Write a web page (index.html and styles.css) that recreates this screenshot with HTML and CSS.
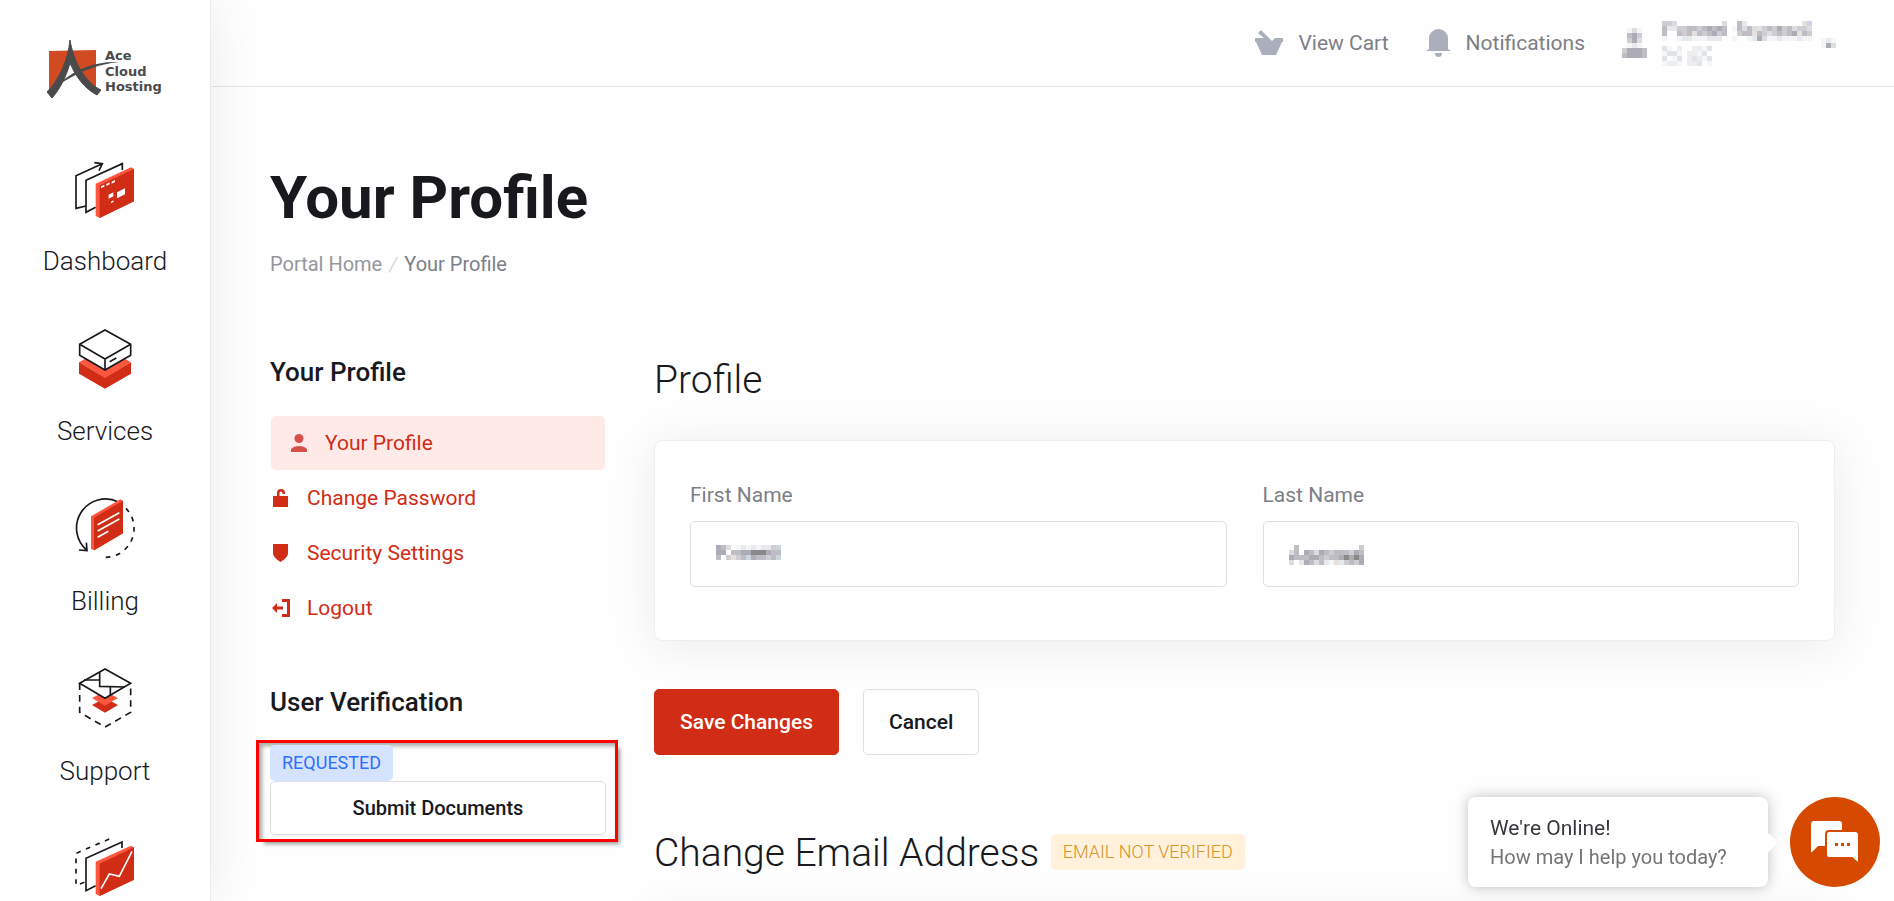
FILE: index.html
```html
<!DOCTYPE html>
<html lang="en">
<head>
    <meta charset="UTF-8">
    <meta name="viewport" content="width=device-width, initial-scale=1.0">
    <title>Your Profile</title>
    <link rel="stylesheet" href="styles.css">
</head>
<body>
    <aside class="sidebar">
        <a class="logo" href="#" aria-label="Ace Cloud Hosting">
            <svg width="117" height="58" viewBox="0 0 117 58">
                <path d="M2 11 L49 10 V48 Q32 36 23 12 Q16 36 2 50Z" fill="#d24a22"/>
                <path d="M23 0 C26 20 38 43 54 50 L50 55 C37 48 29 37 23 23 C19 37 13 49 5 58 L0 52 C12 40 21 20 23 0Z" fill="#4a4a4a" stroke="#4a4a4a"/>
                <path d="M15 41 C30 29 48 21 72 22 C52 24 34 31 16 42Z" fill="#4a4a4a"/>
                <g class="logo-text">
                    <text x="58" y="20">Ace</text>
                    <text x="58" y="36">Cloud</text>
                    <text x="58" y="51">Hosting</text>
                </g>
            </svg>
        </a>
        <nav class="main-nav">
            <a href="#">
                <svg viewBox="0 0 180 180">
                    <g class="line">
                        <path d="M33 144 L3 151 V53 L80 18 M58 14 L82 17 L72 38"/>
                        <path d="M62 148 L33 163 V67 L142 17 V36" fill="#fff"/>
                    </g>
                    <path class="light" d="M62 77 L168 28 L177 33 V130 L74 180 L62 174Z"/>
                    <path class="dark" d="M74 82 L177 33 V130 L74 180Z"/>
                    <path fill="#fff" d="M78 85l10-5v6l-10 5zM94 78l10-5v6l-10 5zM110 71l10-5v6l-10 5zM101 110l14-7v12l-14 7zM126 103l24-12v18l-24 12zM108 131l7-4v5l-7 4z"/>
                </svg>
                <span>Dashboard</span>
            </a>
            <a href="#">
                <svg viewBox="0 0 180 180">
                    <path class="light" d="M12 103 L90 60 L168 103 L90 150Z"/>
                    <path class="dark" d="M12 103 L90 149 L168 103 V137 L90 182 L12 137Z"/>
                    <g class="line">
                        <path fill="#fff" d="M14 49 L90 6 L167 49 V82 L90 126 L14 82Z"/>
                        <path d="M14 49 L90 93 L167 49 M90 93 V126 M104 101 L124 90"/>
                    </g>
                </svg>
                <span>Services</span>
            </a>
            <a href="#">
                <svg viewBox="0 0 180 180">
                    <g class="line">
                        <path d="M130 12 A87 87 0 0 0 36 157 M12 156 L36 158 L34 134"/>
                        <path stroke-dasharray="14 17" d="M153 31 A87 87 0 0 1 76 177"/>
                    </g>
                    <path class="light" d="M48 55 L136 4 L144 8 V106 L58 157 L48 153Z"/>
                    <path class="dark" d="M57 59 L144 8 V106 L57 157Z"/>
                    <path class="line white" d="M68 80 L133 44 M68 99 L133 63 M68 118 L100 100"/>
                </svg>
                <span>Billing</span>
            </a>
            <a href="#">
                <svg viewBox="0 0 180 180">
                    <path class="dark" d="M51 111 L90 90 L129 111 L90 134Z"/>
                    <path class="light" d="M51 90 L90 70 L129 90 L90 113Z"/>
                    <g class="line">
                        <path fill="#fff" d="M14 46 L90 3 L167 46 L90 91Z"/>
                        <path d="M74 13 V55 L150 57 M27 36 H74 M106 57 V81"/>
                        <path stroke-dasharray="20 15" d="M14 46 V133 L90 177 L167 133 V46"/>
                    </g>
                </svg>
                <span>Support</span>
            </a>
            <a href="#" aria-label="Reports">
                <svg viewBox="0 0 180 180">
                    <g class="line">
                        <path stroke-dasharray="14 17" d="M28 133 L3 142 V46 L110 0"/>
                        <path fill="#fff" d="M62 143 L33 158 V61 L141 12 V30"/>
                    </g>
                    <path class="light" d="M62 71 L168 23 L177 28 V125 L74 174 L62 168Z"/>
                    <path class="dark" d="M74 77 L177 28 V125 L74 174Z"/>
                    <path class="line white" d="M78 152 L103 108 L133 115 L171 40"/>
                </svg>
            </a>
        </nav>
    </aside>

    <div class="page">
        <header class="topbar">
            <a href="#">
                <svg width="28" height="26" viewBox="0 0 28 26"><path d="M0 8h9L3 3l3-3 11 11 3-3h8v4h-1l-6 13H7L1 12H0z"/></svg>
                View Cart
            </a>
            <a href="#">
                <svg width="25" height="28" viewBox="0 0 25 28"><path d="M3 20V9a9.500 9 0 0 1 19 0v11l3 2H0zM9 24h7a3.500 4 0 0 1-7 0z"/></svg>
                Notifications
            </a>
            <button class="account" aria-label="Account">
                <svg class="mosaic" data-rows="01310 05640 04630 01210 46665 56665"></svg>
                <span class="account-name">
                    <svg class="mosaic" data-rows="4430000000003005200000000000ab 5224455456565015353a4546453443 500545a54564500455a54345456a54 100122111222001001263112111211"></svg>
                    <svg class="mosaic faint" data-rows="3102002213 1331022130 3013023213 1221022301"></svg>
                </span>
                <svg class="mosaic" data-rows="121 163"></svg>
            </button>
        </header>

        <main class="content">
            <h1>Your Profile</h1>
            <div class="breadcrumb"><a href="#">Portal Home</a><i>/</i><span>Your Profile</span></div>

            <div class="columns">
                <div class="side">
                    <h2>Your Profile</h2>
                    <nav class="side-nav">
                        <a class="active" href="#">
                            <svg viewBox="0 0 18 18"><circle cx="9" cy="4.500" r="4.500"/><path d="M1 18v-3q3-3 8-3t8 3v3z"/></svg>
                            Your Profile
                        </a>
                        <a href="#">
                            <svg viewBox="0 0 18 18"><path d="M1 7h4V4a4 4 0 0 1 8 0v1h-2.500V4a1.500 1.500 0 0 0-3 0v3H16v11H1z"/></svg>
                            Change Password
                        </a>
                        <a href="#">
                            <svg viewBox="0 0 18 18"><path d="M1 0h15v10q-1 4-7.500 8Q2 14 1 10z"/></svg>
                            Security Settings
                        </a>
                        <a href="#">
                            <svg viewBox="0 0 18 18"><path d="M0 9l5-5v3.500h6v3H5V14zM10 0h8v18h-8v-3h5V3h-5z"/></svg>
                            Logout
                        </a>
                    </nav>
                    <h2>User Verification</h2>
                    <div class="verify">
                        <span class="badge badge-info">REQUESTED</span>
                        <button class="btn btn-block">Submit Documents</button>
                    </div>
                </div>

                <div class="main">
                    <h3>Profile</h3>
                    <form class="card">
                        <div class="field">
                            <label for="firstname">First Name</label>
                            <div class="input-wrap">
                                <input type="text" id="firstname">
                                <svg class="mosaic" data-rows="653012121224b 6605566777655 504a45b65545b"></svg>
                            </div>
                        </div>
                        <div class="field">
                            <label for="lastname">Last Name</label>
                            <div class="input-wrap">
                                <input type="text" id="lastname">
                                <svg class="mosaic" data-rows="050000000000004 350653654555465 655566545567676 302653521a24546"></svg>
                            </div>
                        </div>
                    </form>
                    <div class="actions">
                        <button class="btn btn-primary">Save Changes</button>
                        <button class="btn">Cancel</button>
                    </div>
                    <h3>Change Email Address <span class="badge badge-warning">EMAIL NOT VERIFIED</span></h3>
                    <div class="card"></div>
                </div>
            </div>
        </main>
    </div>

    <div class="chat">
        <div class="chat-bubble">
            <p>We're Online!</p>
            <p class="muted">How may I help you today?</p>
        </div>
        <button class="chat-btn" aria-label="Open chat">
            <svg width="48" height="43" viewBox="0 0 48 43">
                <path fill="#fff" d="M3 0h25q3 0 3 3v22H7l-6 6q-1 1-1-1V3q0-3 3-3z"/>
                <path fill="#fff" stroke="#d54a00" stroke-width="2" d="M18 10h26q4 0 4 4v29l-7-6H18q-3 0-3-3V13q0-3 3-3z"/>
                <path fill="#d54a00" d="M24 22h3v3h-3zM30 22h3v3h-3zM36 22h3v3h-3z"/>
            </svg>
        </button>
    </div>

    <script>
        const size = 5;
        const tones = {
            1: '#f4f5f7', 2: '#e8e9ec', 3: '#dcdde2', 4: '#cdcdd2', 5: '#bdbdc3',
            6: '#abacb6', 7: '#8b8889', a: '#e8e0dc', b: '#ccd6e2'
        };

        document.querySelectorAll('.mosaic').forEach(svg => {
            const rows = svg.dataset.rows.split(' ');
            let html = '';
            rows.forEach((row, y) => {
                [...row].forEach((c, x) => {
                    if (tones[c]) {
                        html += `<rect x="${x * size}" y="${y * size}" width="${size}" height="${size}" fill="${tones[c]}"/>`;
                    }
                });
            });
            svg.setAttribute('width', rows[0].length * size);
            svg.setAttribute('height', rows.length * size);
            svg.innerHTML = html;
        });
    </script>
</body>
</html>
```

FILE: styles.css
```css
* {
    box-sizing: border-box;
}
body {
    margin: 0;
    height: 100vh;
    display: flex;
    overflow: hidden;
    background-color: #fefefe;
    color: #18191d;
    font-family: Roboto, "Liberation Sans", sans-serif;
    font-size: 21px;
}
a {
    color: inherit;
    text-decoration: none;
}
svg {
    display: block;
    flex-shrink: 0;
}
h1, h2, h3, p {
    margin: 0;
}

/* left menu */
.sidebar {
    width: 211px;
    flex-shrink: 0;
    padding-top: 40px;
    overflow: hidden;
    background-color: #fff;
    border-right: 1px solid #ebebeb;
    box-shadow: 0 0 50px rgba(0, 0, 0, 0.08);
    z-index: 1;
}
.logo {
    display: block;
    margin-left: 47px;
    margin-bottom: 60px;
}
.logo-text {
    font-family: "DejaVu Sans", sans-serif;
    font-size: 13px;
    font-weight: bold;
    fill: #4a4a4a;
}
.main-nav {
    display: flex;
    flex-direction: column;
    gap: 47px;
}
.main-nav a {
    display: flex;
    flex-direction: column;
    align-items: center;
    gap: 23px;
    font-size: 26px;
    font-weight: 300;
    line-height: 40px;
}
.main-nav svg {
    width: 60px;
    height: 60px;
    overflow: visible;
}
.line {
    fill: none;
    stroke: #18191d;
    stroke-width: 5;
}
.white {
    stroke: #fff;
}
.light {
    fill: #ff5640;
}
.dark {
    fill: #d12c15;
}

/* top bar */
.page {
    flex: 1;
    min-width: 0;
}
.topbar {
    height: 87px;
    padding-right: 58px;
    display: flex;
    justify-content: flex-end;
    align-items: center;
    gap: 37px;
    border-bottom: 1px solid #e6e6e8;
    color: #7d7f87;
}
.topbar a {
    display: flex;
    align-items: center;
    gap: 15px;
}
.topbar a svg {
    fill: #abaebb;
}
.account {
    display: flex;
    align-items: center;
    gap: 9px;
    padding: 0;
    border: none;
    background: none;
}
.account-name {
    display: flex;
    flex-direction: column;
    gap: 5px;
    margin-left: 6px;
}
.faint {
    opacity: 0.8;
}

/* content */
.content {
    padding: 81px 59px 0;
}
h1 {
    font-size: 60px;
    font-weight: 700;
    line-height: 60px;
}
.breadcrumb {
    margin-top: 21px;
    font-size: 20px;
    line-height: 30px;
    color: #7d7f87;
}
.breadcrumb a {
    color: #95979d;
}
.breadcrumb i {
    margin: 0 7px;
    color: #d8d9dc;
}
.columns {
    display: flex;
    gap: 48px;
    margin-top: 76px;
}
.side {
    width: 336px;
    flex-shrink: 0;
}
h2 {
    font-size: 26px;
    font-weight: 500;
    line-height: 34px;
    margin-bottom: 27px;
}
.side-nav {
    display: flex;
    flex-direction: column;
    gap: 1px;
    margin-bottom: 50px;
    color: #d12c15;
}
.side-nav a {
    height: 54px;
    display: flex;
    align-items: center;
    gap: 17px;
    padding-left: 2px;
}
.side-nav svg {
    width: 18px;
    height: 18px;
    fill: #d12c15;
}
.side-nav .active {
    margin: 0 1px;
    padding-left: 19px;
    border-radius: 5px;
    background-color: #ffeae8;
}
.side-nav .active svg {
    fill: #d5504b;
}
.verify {
    outline: 3px solid #f00;
    margin: -3px -9px 0 -11px;
    padding: 2px 9px 4px 11px;
    box-shadow: 5px 5px 4px rgba(0, 0, 0, 0.4), inset 3px 3px 4px rgba(0, 0, 0, 0.35);
}
.badge {
    display: inline-block;
    height: 36px;
    padding: 0 12px;
    border-radius: 5px;
    font-size: 18px;
    line-height: 36px;
    vertical-align: top;
}
.badge-info {
    background-color: #d6e3ff;
    color: #2d6fff;
}
.badge-warning {
    margin: 5px 0 0 2px;
    background-color: #fff1dc;
    color: #d89424;
}
.btn {
    height: 66px;
    padding: 0 25px;
    border: 1px solid #e0e0e2;
    border-radius: 5px;
    background-color: #fff;
    color: #18191d;
    font-family: inherit;
    font-size: 21px;
    font-weight: 500;
}
.btn-block {
    display: block;
    width: 100%;
    height: 54px;
    font-size: 20px;
}
.btn-primary {
    border-color: #d12c15;
    background-color: #d12c15;
    color: #fff;
}
.main {
    flex: 1;
    min-width: 0;
}
h3 {
    padding-top: 1px;
    font-size: 39px;
    font-weight: 300;
    line-height: 48px;
    margin-bottom: 36px;
}
.card {
    min-height: 201px;
    padding: 42px 35px 0;
    display: flex;
    gap: 36px;
    border: 1px solid #eee;
    border-radius: 8px;
    background-color: #fff;
    box-shadow: 0 5px 50px rgba(0, 0, 0, 0.08);
}
.field {
    flex: 1;
}
.field label {
    display: block;
    margin-bottom: 14px;
    line-height: 24px;
    color: #7d7f87;
}
.input-wrap {
    position: relative;
}
.input-wrap input {
    display: block;
    width: 100%;
    height: 66px;
    padding: 0 24px;
    border: 1px solid #e0e0e2;
    border-radius: 5px;
    background-color: #fff;
    font-family: inherit;
    font-size: 21px;
}
.input-wrap .mosaic {
    position: absolute;
    left: 26px;
    top: 24px;
}
.actions {
    display: flex;
    gap: 24px;
    margin: 48px 0 73px;
}

/* chat widget */
.chat {
    position: fixed;
    right: 14px;
    bottom: 14px;
    display: flex;
    gap: 22px;
    z-index: 2;
}
.chat-bubble {
    position: relative;
    width: 300px;
    height: 90px;
    padding: 17px 22px;
    border-radius: 8px;
    background-color: #fff;
    box-shadow: 0 0 14px rgba(0, 0, 0, 0.25);
    color: #36383c;
    line-height: 29px;
}
.chat-bubble::after {
    content: "";
    position: absolute;
    right: -7px;
    top: 38px;
    width: 15px;
    height: 15px;
    border-radius: 3px;
    background-color: #fff;
    transform: rotate(45deg);
}
.muted {
    font-size: 20px;
    color: #757575;
}
.chat-btn {
    width: 90px;
    height: 90px;
    padding: 0;
    display: flex;
    justify-content: center;
    align-items: center;
    border: none;
    border-radius: 50%;
    background-color: #d54a00;
}
```
